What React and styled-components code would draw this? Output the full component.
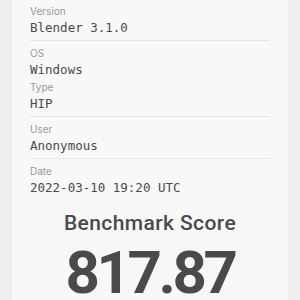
import React from 'react'
import styled, {createGlobalStyle} from 'styled-components'

const GlobalStyle = createGlobalStyle`
  html, body {
    margin: 0;
    padding: 0;
    background: #eeeeee;
  }
  body {
    font-family: Roboto, "Noto Sans", sans-serif;
  }
`

const Page = styled.main`
  width: 300px;
  height: 300px;
  overflow: hidden;
  padding: 0 12px;
  box-sizing: border-box;
`

const Card = styled.section`
  background: #f8f8f8;
  padding: 4px 18px 24px;
  height: 100%;
  box-sizing: border-box;
`

const Field = styled.div`
  display: flex;
  flex-direction: column;
  border-bottom: ${props => (props.divided ? '1px solid #e6e6e6' : 'none')};
  padding-bottom: ${props => (props.divided ? '2px' : '0')};
  margin-bottom: ${props => (props.divided ? '5px' : '0')};
`

const Label = styled.span`
  font-family: Inter, Roboto, sans-serif;
  font-size: 10px;
  line-height: 14px;
  color: #9a9a9a;
`

const Value = styled.span`
  font-family: "DejaVu Sans Mono", "Liberation Mono", monospace;
  font-size: 12.5px;
  line-height: 20px;
  color: #4a4a4a;
`

const Score = styled.div`
  display: flex;
  flex-direction: column;
  align-items: center;
  padding-top: 12px;
  color: #4a4a4c;
`

const ScoreTitle = styled.h2`
  margin: 0;
  font-size: 21px;
  line-height: 26px;
  font-weight: 500;
  letter-spacing: 0.4px;
`

const ScoreValue = styled.div`
  font-size: 60px;
  line-height: 70px;
  font-weight: 700;
  letter-spacing: -3.4px;
  margin-top: 2px;
`

const fields = [
  {label: 'Version', value: 'Blender 3.1.0', divided: true},
  {label: 'OS', value: 'Windows'},
  {label: 'Type', value: 'HIP', divided: true},
  {label: 'User', value: 'Anonymous', divided: true},
  {label: 'Date', value: '2022-03-10 19:20 UTC'},
]

function App() {
  return (
    <>
      <GlobalStyle />
      <Page>
        <Card>
          {fields.map(f => (
            <Field key={f.label} divided={f.divided}>
              <Label>{f.label}</Label>
              <Value>{f.value}</Value>
            </Field>
          ))}
          <Score>
            <ScoreTitle>Benchmark Score</ScoreTitle>
            <ScoreValue>817.87</ScoreValue>
          </Score>
        </Card>
      </Page>
    </>
  )
}

export default App
